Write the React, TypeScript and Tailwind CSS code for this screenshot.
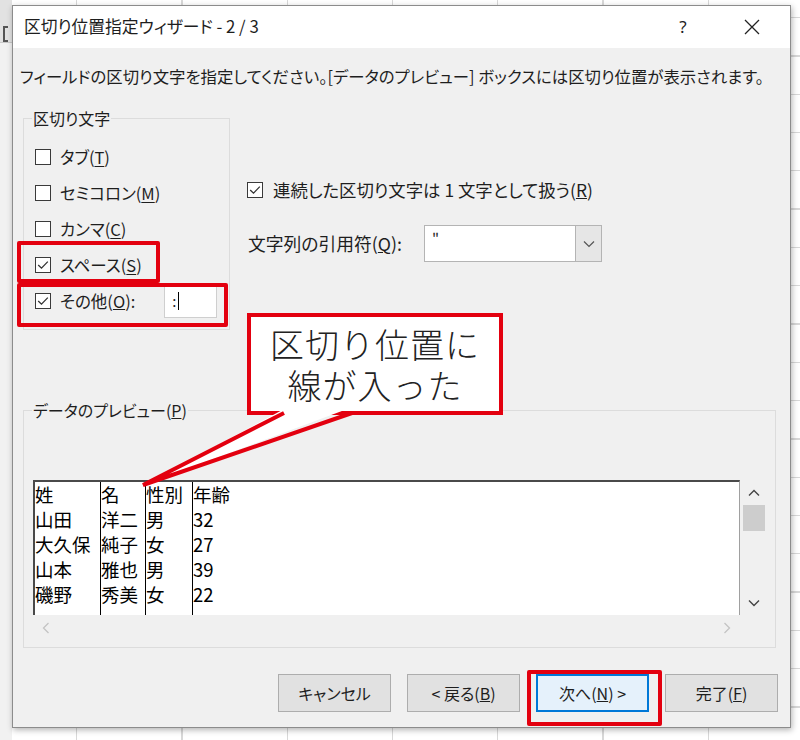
import React from "react";

const RED = "border-[#e3000f]";

function Box({ checked }: { checked?: boolean }) {
  return (
    <span className="inline-flex w-[16px] h-[16px] border border-[#3a3a3a] bg-white items-center justify-center shrink-0">
      {checked && (
        <svg width="12" height="10" viewBox="0 0 12 10">
          <path d="M1.2 5 L4.5 8.2 L10.8 1.6" fill="none" stroke="#333" strokeWidth="1.3" />
        </svg>
      )}
    </span>
  );
}

function CheckRow({ checked, pre, key_, post = ")" }: { checked?: boolean; pre: string; key_: string; post?: string }) {
  return (
    <div className="h-[36px] flex items-center gap-[9px]">
      <Box checked={checked} />
      <span className="text-[16.5px]">
        {pre}
        <u className="underline-offset-2">{key_}</u>
        {post}
      </span>
    </div>
  );
}

function Btn({ children, primary }: { children: React.ReactNode; primary?: boolean }) {
  return (
    <div
      className={
        primary
          ? "w-[113px] h-[38px] flex items-center justify-center bg-[#e5f1fb] border-2 border-[#0078d7] text-[16px]"
          : "w-[113px] h-[38px] flex items-center justify-center bg-[#e1e1e1] border border-[#adadad] text-[16px]"
      }
    >
      {children}
    </div>
  );
}

const rows = [
  ["姓", "名", "性別", "年齢"],
  ["山田", "洋二", "男", "32"],
  ["大久保", "純子", "女", "27"],
  ["山本", "雅也", "男", "39"],
  ["磯野", "秀美", "女", "22"],
];

export default function App() {
  return (
    <div className="relative w-[800px] h-[740px] overflow-hidden bg-white bg-[image:repeating-linear-gradient(to_bottom,transparent_0,transparent_37px,#d8d8d8_37px,#d8d8d8_38.3px),repeating-linear-gradient(to_right,transparent_0,transparent_104px,#d8d8d8_104px,#d8d8d8_105.3px)] bg-[position:0_-20px,-28px_0] [font-family:'Noto_Sans_CJK_JP','Noto_Sans',sans-serif] [font-feature-settings:'palt'] text-[#1e1e1e]">
      {/* spreadsheet bits behind the dialog */}
      <div className="absolute left-0 top-0 w-[12px] h-[740px] bg-[#f1f1f1]" />
      <div className="absolute left-0 top-0 w-[12px] h-[43px] bg-[#e2e2e2] border-b border-[#c8c8c8]" />
      <div className="absolute left-[3px] top-[26px] w-[5px] h-[16px] border-l-2 border-t-2 border-b-2 border-[#555]" />

      {/* dialog window */}
      <div className="absolute left-[12px] top-[5px] w-[779px] h-[723px] bg-[#f0f0f0] border border-[#8c8c8c] shadow-[1px_2px_6px_rgba(0,0,0,0.3)] flex flex-col">
        {/* title bar */}
        <div className="h-[42px] bg-white flex items-center pl-[11px] shrink-0">
          <span className="text-[16.8px]">区切り位置指定ウィザード - 2 / 3</span>
          <span className="ml-auto w-[46px] text-center text-[17px] [font-family:'Noto_Sans',sans-serif]">?</span>
          <span className="ml-[23px] mr-[15px] w-[46px] flex items-center justify-center">
            <svg width="16" height="16" viewBox="0 0 16 16">
              <path d="M1 1 L15 15 M15 1 L1 15" stroke="#222" strokeWidth="1.3" />
            </svg>
          </span>
        </div>

        {/* body */}
        <div className="flex-1 flex flex-col pl-[10px] pr-[14px] text-[16px]">
          <div className="pt-[16px] h-[40px] leading-[24px] -ml-[3px] text-[16.4px] whitespace-nowrap">
            フィールドの区切り文字を指定してください。[データのプレビュー] ボックスには区切り位置が表示されます。
          </div>

          <div className="flex mt-[18px]">
            <fieldset className="w-[207px] h-[224px] border border-[#dcdcdc]">
              <legend className="ml-[8px] px-[1px] leading-[24px]">区切り文字</legend>
              <div className="pl-[11px] pt-[9px]">
                <CheckRow pre="タブ(" key_="T" />
                <CheckRow pre="セミコロン(" key_="M" />
                <CheckRow pre="カンマ(" key_="C" />
                <CheckRow checked pre="スペース(" key_="S" />
                <div className="h-[36px] flex items-center gap-[9px]">
                  <Box checked />
                  <span className="text-[16.5px]">
                    その他(<u>O</u>):
                  </span>
                  <div className="ml-[20px] w-[53px] h-[34px] bg-white border border-[#cfcfcf] flex items-center pl-[7px] text-[15px]">
                    :<span className="ml-[2px] w-[1px] h-[18px] bg-black" />
                  </div>
                </div>
              </div>
            </fieldset>

            <div className="ml-[17px] flex flex-col">
              <div className="mt-[72px] h-[24px] flex items-center gap-[10px]">
                <Box checked />
                <span className="text-[17.4px]">
                  連続した区切り文字は 1 文字として扱う(<u>R</u>)
                </span>
              </div>
              <div className="mt-[23px] flex items-center">
                <span className="w-[177px] pl-[1px] text-[17.8px]">
                  文字列の引用符(<u>Q</u>):
                </span>
                <div className="w-[178px] h-[37px] bg-white border border-[#b4b4b4] flex">
                  <div className="flex-1 pl-[7px] pt-[2px] text-[15px] leading-[20px]">"</div>
                  <div className="w-[26px] bg-[#e6e6e6] border-l border-[#b4b4b4] flex items-center justify-center">
                    <svg width="12" height="8" viewBox="0 0 12 8">
                      <path d="M1 1.5 L6 6.5 L11 1.5" fill="none" stroke="#555" strokeWidth="1.2" />
                    </svg>
                  </div>
                </div>
              </div>
            </div>
          </div>

          <fieldset className="mt-[68px] w-[753px] h-[250px] border border-[#dcdcdc]">
            <legend className="ml-[8px] px-[1px] leading-[24px]">
              データのプレビュー(<u>P</u>)
            </legend>
            <div className="ml-[9px] mt-[58px] w-[735px] h-[160px] flex flex-col">
              <div className="flex h-[135px]">
                <div className="w-[707px] bg-white border-t-2 border-l-2 border-[#4a4a4a] border-r border-r-[#a0a0a0] flex overflow-hidden text-[18.5px] leading-[25px] text-black [font-feature-settings:normal]">
                  {[65, 45, 47, 0].map((w, ci) => (
                    <div
                      key={ci}
                      className={ci === 0 ? "w-[65px] shrink-0" : ci === 3 ? "flex-1 border-l border-black" : "shrink-0 border-l border-black"}
                      style={ci === 1 || ci === 2 ? { width: w } : undefined}
                    >
                      {rows.map((r, ri) => (
                        <div key={ri} className="h-[25px] whitespace-nowrap">
                          {r[ci]}
                        </div>
                      ))}
                    </div>
                  ))}
                </div>
                <div className="flex-1 flex flex-col items-center">
                  <svg className="mt-[9px]" width="12" height="8" viewBox="0 0 12 8">
                    <path d="M1 6.5 L6 1.5 L11 6.5" fill="none" stroke="#444" strokeWidth="1.4" />
                  </svg>
                  <div className="mt-[8px] w-[22px] h-[26px] bg-[#cdcdcd]" />
                  <svg className="mt-auto mb-[8px]" width="12" height="8" viewBox="0 0 12 8">
                    <path d="M1 1.5 L6 6.5 L11 1.5" fill="none" stroke="#444" strokeWidth="1.4" />
                  </svg>
                </div>
              </div>
              <div className="h-[25px] flex items-center justify-between pl-[9px] pr-[37px]">
                <svg width="8" height="12" viewBox="0 0 8 12">
                  <path d="M6.5 1 L1.5 6 L6.5 11" fill="none" stroke="#c4c4c4" strokeWidth="1.3" />
                </svg>
                <svg width="8" height="12" viewBox="0 0 8 12">
                  <path d="M1.5 1 L6.5 6 L1.5 11" fill="none" stroke="#c4c4c4" strokeWidth="1.3" />
                </svg>
              </div>
            </div>
          </fieldset>

          <div className="mt-[26px] -mr-[2px] flex justify-end gap-[16px]">
            <Btn>キャンセル</Btn>
            <Btn>
              &lt; 戻る(<u>B</u>)
            </Btn>
            <Btn primary>
              次へ(<u>N</u>) &gt;
            </Btn>
            <Btn>
              完了(<u>F</u>)
            </Btn>
          </div>
        </div>
      </div>

      {/* annotations */}
      <div className={`absolute left-[17px] top-[241px] w-[143px] h-[42px] border-[4px] ${RED} rounded-[2px]`} />
      <div className={`absolute left-[17px] top-[283px] w-[211px] h-[44px] border-[4px] ${RED} rounded-[2px]`} />
      <div className={`absolute left-[527px] top-[670px] w-[135px] h-[56px] border-[4px] ${RED} rounded-[2px]`} />

      <div className={`absolute left-[247px] top-[313px] w-[256px] h-[102px] bg-white border-[4px] ${RED} flex items-center justify-center text-[34px] font-light text-[#222] [font-feature-settings:normal]`}>
        <p className="text-center leading-[41px] tracking-[1px]">
          区切り位置に
          <br />
          線が入った
        </p>
      </div>
      <svg className="absolute left-0 top-0 pointer-events-none" width="800" height="740" viewBox="0 0 800 740">
        <polygon points="286,408 143,485 350,408" fill="white" />
        <path d="M284 413 L143 485 L352 413" fill="none" stroke="#e3000f" strokeWidth="4" strokeLinejoin="miter" />
      </svg>
    </div>
  );
}
